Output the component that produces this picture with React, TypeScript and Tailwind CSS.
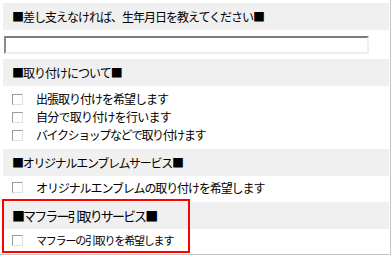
import React from "react";

const font = { fontFamily: '"Noto Sans CJK JP", "Noto Sans", sans-serif' };

function Box() {
  return (
    <span className="inline-block w-[11px] h-[11px] shrink-0 border border-t-[#9a9a9a] border-l-[#9a9a9a] border-r-[#e0e0e0] border-b-[#e0e0e0] bg-white" />
  );
}

function Header({ text, cls }: { text: string; cls: string }) {
  return (
    <div className={"h-[27px] bg-[#f0f0f0] flex items-center pl-[9px] text-black whitespace-nowrap " + cls}>
      {text}
    </div>
  );
}

function Row({ text, cls, h }: { text: string; cls: string; h: string }) {
  return (
    <div className={"flex items-center pl-[9px] whitespace-nowrap text-black " + h}>
      <Box />
      <span className={"ml-[13px] " + cls}>{text}</span>
    </div>
  );
}

export default function App() {
  return (
    <div className="relative w-[391px] h-[255px] bg-white border-r border-b border-[#c4c4c4] overflow-hidden" style={font}>
      <div className="flex flex-col pt-[3px] pl-[3px] pr-[1px]">
        <Header text="■差し支えなければ、生年月日を教えてください■" cls="text-[12px] tracking-[-1px]" />
        <div className="h-[29px] pt-[6px] pl-[1px]">
          <div className="w-[365px] h-[18px] bg-white border-2 border-t-[#7c7c74] border-l-[#8a8a84] border-r-[#f0efe6] border-b-[#f0efe6]" />
        </div>
        <Header text="■取り付けについて■" cls="text-[12px] tracking-[-1px]" />
        <div className="flex flex-col pt-[4px] pb-[5px]">
          <Row text="出張取り付けを希望します" cls="text-[12px] tracking-[-1px]" h="h-[18px]" />
          <Row text="自分で取り付けを行います" cls="text-[12px] tracking-[-0.75px]" h="h-[18px]" />
          <Row text="バイクショップなどで取り付けます" cls="text-[12px] tracking-[-1.4px]" h="h-[18px]" />
        </div>
        <Header text="■オリジナルエンブレムサービス■" cls="text-[12px] tracking-[-1.3px]" />
        <Row text="オリジナルエンブレムの取り付けを希望します" cls="text-[12px] tracking-[-1.1px]" h="h-[23px]" />
        <div className="h-[3px]" />
        <Header text="■マフラー引取りサービス■" cls="text-[13px] tracking-[-1.9px]" />
        <Row text="マフラーの引取りを希望します" cls="text-[11px] tracking-[-1.2px]" h="h-[23px]" />
      </div>
      <div className="absolute left-[2px] top-[199px] w-[188px] h-[54px] border-2 border-[#ff0000]" />
    </div>
  );
}
